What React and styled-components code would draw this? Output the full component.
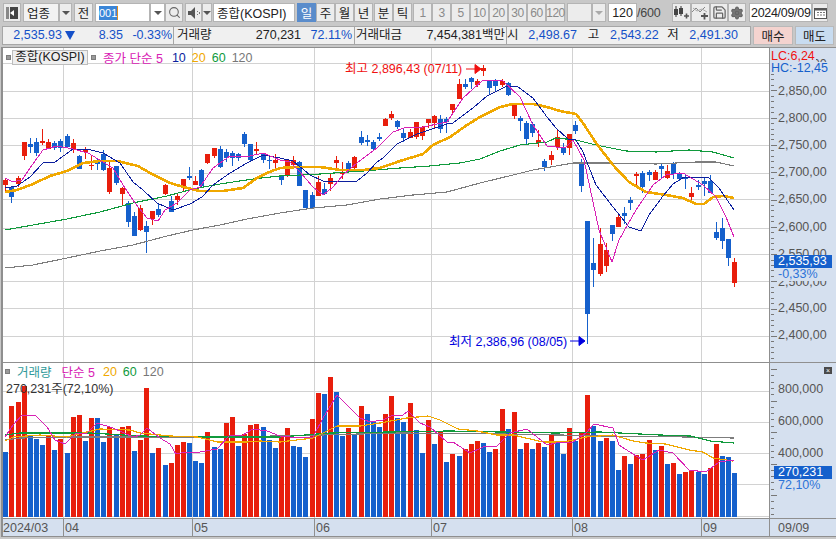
import React from 'react';
import styled, { createGlobalStyle } from 'styled-components';
import { Search, Save, Settings } from 'lucide-react';

const FONT = '"Liberation Sans", "Noto Sans CJK KR", sans-serif';
const RED = '#e81e0c';
const BLUE = '#1560cc';
const AXIS_BG = '#d5e0ef';
const GRID = '#d2d2d2';

const GlobalStyle = createGlobalStyle`
  html, body { margin: 0; padding: 0; background: #c8c8c8; }
  body { width: 836px; height: 539px; overflow: hidden; font-family: ${FONT}; font-size: 12.5px; color: #222; }
`;

// zoomed pixel readings: [wick top, body top, body bottom, wick bottom, colour]
const seg = (base, rows) => rows.map(r => [base + r[0] / 3, base + r[1] / 3, base + r[2] / 3, base + r[3] / 3, r[4]]);
const candles = [
  ...seg(75, [
    [308, 315, 330, 350, 'r'], [335, 335, 365, 384, 'b'], [303, 309, 327, 335, 'r'], [200, 201, 243, 255, 'r'],
    [189, 207, 216, 234, 'b'], [189, 201, 234, 243, 'b'], [162, 198, 204, 210, 'r'], [193, 201, 222, 222, 'r'],
    [198, 204, 219, 225, 'b'], [192, 198, 219, 231, 'b'], [178, 183, 216, 216, 'b'], [192, 204, 222, 234, 'r'],
    [240, 243, 282, 282, 'b'], [216, 222, 231, 252, 'r'], [243, 270, 273, 285, 'r'], [250, 261, 267, 285, 'b'],
    [225, 237, 285, 288, 'b'], [261, 279, 351, 357, 'r'], [273, 273, 324, 330, 'b'], [336, 339, 357, 390, 'r'],
    [378, 384, 441, 456, 'b'], [411, 423, 483, 483, 'b'], [390, 399, 465, 468, 'r'], [438, 453, 471, 534, 'b'],
    [408, 408, 432, 450, 'r'], [384, 402, 420, 426, 'b'], [327, 330, 357, 360, 'r'], [363, 378, 411, 411, 'b'],
    [354, 363, 375, 390, 'r'], [312, 312, 336, 351, 'r'], [276, 303, 309, 315, 'b'], [303, 318, 330, 330, 'r'],
    [282, 285, 333, 336, 'b'], [237, 237, 264, 267, 'r'], [219, 219, 243, 249, 'r'], [213, 222, 276, 279, 'b'],
    [222, 231, 249, 261, 'b'], [228, 234, 249, 273, 'b'], [234, 237, 249, 258, 'b'], [171, 177, 207, 216, 'b'],
    [207, 207, 255, 258, 'b'], [201, 222, 228, 237, 'r'], [234, 237, 255, 264, 'b'], [240, 255, 258, 282, 'b'],
    [237, 255, 264, 288, 'r'], [303, 303, 315, 330, 'b'],
  ]),
  ...seg(55, [
    [315, 315, 360, 366, 'r'], [303, 315, 330, 333, 'r'], [318, 321, 393, 393, 'b'], [405, 405, 459, 459, 'b'],
    [411, 420, 459, 459, 'b'], [363, 381, 423, 423, 'r'], [384, 402, 417, 420, 'b'], [357, 369, 387, 408, 'r'],
    [303, 315, 324, 345, 'r'], [321, 351, 357, 372, 'r'], [318, 324, 348, 351, 'b'], [303, 306, 339, 342, 'r'],
    [228, 246, 264, 270, 'b'], [240, 255, 261, 273, 'b'], [255, 261, 282, 288, 'b'], [234, 246, 252, 258, 'b'],
    [189, 192, 213, 213, 'r'], [168, 177, 189, 195, 'r'], [195, 198, 216, 222, 'b'], [222, 234, 249, 261, 'b'],
    [222, 231, 249, 249, 'r'], [201, 201, 246, 252, 'r'], [213, 216, 243, 255, 'r'], [192, 192, 204, 219, 'r'],
    [180, 183, 204, 219, 'r'], [180, 192, 222, 234, 'b'], [186, 192, 201, 234, 'b'], [147, 147, 165, 177, 'r'],
    [72, 87, 132, 132, 'r'], [72, 87, 96, 102, 'b'], [66, 69, 81, 102, 'b'], [72, 78, 90, 96, 'r'],
    [30, 39, 47, 63, 'r'], [75, 78, 99, 117, 'b'], [72, 75, 93, 111, 'b'], [72, 78, 90, 96, 'r'],
    [81, 84, 120, 123, 'b'], [150, 150, 183, 192, 'r'], [183, 189, 198, 228, 'b'], [198, 204, 252, 267, 'b'],
    [201, 207, 234, 246, 'b'], [225, 255, 264, 276, 'r'], [312, 318, 336, 348, 'b'], [288, 300, 315, 330, 'r'],
    [225, 246, 276, 285, 'r'],
  ]),
  ...seg(110, [
    [100, 114, 129, 135, 'b'], [72, 72, 114, 135, 'r'], [33, 45, 63, 72, 'b'], [147, 156, 228, 246, 'b'],
    [333, 333, 612, 702, 'b'], [384, 459, 480, 531, 'b'], [354, 402, 492, 498, 'r'], [399, 420, 468, 486, 'r'],
    [345, 345, 372, 393, 'b'], [312, 321, 351, 351, 'r'], [291, 309, 318, 342, 'b'], [261, 270, 279, 300, 'b'],
    [186, 192, 198, 225, 'r'], [183, 189, 231, 249, 'b'], [180, 186, 195, 213, 'b'], [180, 186, 210, 210, 'r'],
    [162, 168, 177, 207, 'b'], [165, 183, 204, 207, 'r'], [156, 159, 192, 207, 'b'], [186, 189, 207, 213, 'b'],
    [195, 201, 207, 237, 'b'], [231, 249, 261, 276, 'r'], [210, 225, 231, 240, 'b'], [201, 213, 222, 258, 'b'],
    [195, 213, 249, 249, 'b'], [336, 366, 384, 390, 'b'], [324, 354, 393, 417, 'b'], [387, 387, 444, 468, 'b'],
    [444, 456, 519, 531, 'r'],
  ]),
];

// volume bar tops as zoomed pixels, 'r' bars are negative numbers
const volumes = [
  291, -153, -141, -93, 243, 252, 270, -240, 285, -252, 294, -186, -180, 258, -189, 189, 261, -216, 237, -216,
  -213, 288, -255, -99, 294, -279, 330, -324, -270, -261, 264, 318, 324, -231, 276, 282, -204, -186, 273, -237,
  -210, -207, 216, 255, 279, -240, -219, 273, 276, 306, -192, -114, 117, -66, 111, 243, -219, 237, -153, 177,
  201, 216, -177, -123, 189, 201, -144, 225, 294, -195, 267, -228, 321, -297, 303, -282, -267, -258, 264, 291,
  -282, -162, 222, -171, 282, -264, 282, -264, 276, -240, 264, 297, -219, 258, -231, -120, 213, 258, -249, 258,
  345, -303, 327, -300, -297, -255, 285, -273, 327, -324, 357, -351, -345, 351, 357, -339, -267, 303, 306, 354,
];

const pts = list => list.map(p => p.join(',')).join(' ');
const ma5 = pts([[5,178],[13,182],[22,180],[30,168],[43,150],[57,146],[73,149],[88,153],[103,162],[113,168],[123,185],[135,203],[147,218],[158,221],[165,210],[177,203],[190,190],[200,187],[213,168],[230,156],[250,156],[263,153],[280,160],[290,162],[300,172],[313,187],[323,195],[333,187],[343,175],[357,163],[377,148],[393,132],[407,127],[423,127],[447,122],[463,98],[483,80],[503,81],[520,97],[533,125],[547,146],[556,147],[565,148],[573,140],[584,160],[599,230],[612,262],[619,240],[636,210],[653,185],[666,175],[683,173],[703,185],[716,197],[726,217],[734,237]]);
const ma10 = pts([[5,188],[17,186],[30,177],[43,163],[55,162],[73,149],[87,149],[103,153],[120,163],[133,182],[143,190],[157,203],[173,210],[190,204],[202,197],[213,185],[230,173],[247,163],[263,155],[280,158],[293,161],[310,175],[323,181],[357,181],[367,173],[377,162],[383,158],[397,144],[417,134],[447,124],[453,123],[473,108],[487,96],[507,86],[517,86],[533,98],[547,117],[556,128],[568,139],[576,140],[583,152],[596,185],[613,207],[629,227],[641,231],[649,215],[663,196],[673,184],[684,177],[709,178],[719,188],[734,210]]);
const ma20 = pts([[5,192],[17,190],[33,184],[50,176],[67,171],[83,163],[100,161],[117,161],[138,166],[150,173],[170,183],[187,188],[200,191],[223,191],[243,188],[257,178],[267,173],[280,168],[297,167],[320,167],[340,170],[363,170],[380,168],[400,161],[423,154],[433,145],[450,137],[467,125],[480,117],[500,107],[513,104],[533,104],[547,107],[560,111],[576,114],[583,123],[596,143],[613,165],[629,182],[646,192],[666,195],[683,198],[696,204],[704,204],[713,197],[723,196],[734,198]]);
const ma60 = pts([[5,230],[33,225],[67,219],[100,212],[133,203],[167,196],[193,189],[220,184],[253,179],[280,176],[320,174],[363,171],[400,168],[430,166],[460,163],[480,159],[500,151],[520,145],[547,142],[556,138],[576,140],[596,145],[626,151],[656,152],[689,150],[713,152],[734,158]]);
const ma120 = pts([[5,268],[33,265],[67,258],[100,251],[133,245],[167,236],[193,230],[220,225],[247,219],[280,213],[313,208],[347,205],[380,199],[413,195],[447,192],[480,183],[513,175],[533,170],[556,166],[573,163],[606,163],[656,164],[696,162],[716,162],[734,166]]);

const vol5 = pts([[5,437],[13,425],[22,415],[35,415],[47,427],[55,440],[65,444],[75,434],[87,433],[97,423],[113,428],[133,437],[140,435],[147,428],[160,438],[170,444],[176,454],[187,452],[200,452],[217,449],[230,435],[243,435],[253,429],[267,431],[280,436],[300,438],[313,437],[323,418],[337,395],[347,405],[360,418],[370,422],[383,420],[393,415],[403,415],[408,411],[420,423],[430,427],[447,442],[453,442],[470,453],[483,447],[497,446],[510,433],[527,429],[547,445],[556,443],[573,442],[586,433],[594,424],[613,428],[619,445],[636,456],[643,460],[659,450],[673,453],[689,470],[706,472],[719,462],[734,460]]);
const vol20 = pts([[5,441],[13,437],[40,435],[67,437],[87,432],[100,429],[130,430],[140,433],[170,436],[197,437],[217,442],[247,442],[260,441],[280,442],[313,438],[337,426],[360,426],[380,423],[407,418],[428,416],[440,420],[458,429],[477,431],[497,435],[513,435],[543,442],[560,442],[569,441],[586,437],[613,435],[633,441],[646,443],[666,444],[689,450],[703,452],[713,458],[733,461]]);
const vol60 = pts([[5,435],[20,433],[90,433],[140,436],[200,437],[280,437],[330,433],[450,431],[500,432],[556,433],[600,432],[660,435],[690,436],[710,441],[734,443]]);
const vol120 = pts([[5,440],[20,438],[70,437],[190,437],[280,436],[400,433],[500,434],[560,435],[600,436],[690,437],[734,438]]);

const priceGrid = [63, 91, 118, 145, 173, 199, 228, 254, 281, 308, 336];
const volumeGrid = [391, 422, 453, 484, 516];
const monthLines = [63, 192, 314, 431, 572, 701];
const priceLabels = [
  ['2,900,00', 63], ['2,850,00', 90], ['2,800,00', 117], ['2,750,00', 144], ['2,700,00', 171],
  ['2,650,00', 198], ['2,600,00', 226], ['2,550,00', 253], ['2,500,00', 281], ['2,450,00', 307], ['2,400,00', 334],
];
const volumeLabels = [['800,000', 388], ['600,000', 420], ['400,000', 452]];
const monthLabels = [['2024/03', 3], ['04', 65], ['05', 194], ['06', 316], ['07', 433], ['08', 574], ['09', 703]];

const xAt = i => Math.round(5.3 + 6.126 * i);
const range = (from, to, step) => {
  const out = [];
  for (let v = from; v < to; v += step) out.push(v);
  return out;
};

const Page = styled.div`
  width: 836px;
  height: 539px;
  display: flex;
  flex-direction: column;
`;

const ToolBar = styled.div`
  display: flex;
  align-items: stretch;
  height: 19px;
  padding: 3px 0 0 3px;
`;

const Group = styled.div`
  display: flex;
  margin-left: ${p => p.$ml || 0}px;
`;

const ToolButton = styled.div`
  box-sizing: border-box;
  width: ${p => p.$w || 19}px;
  display: flex;
  align-items: center;
  justify-content: center;
  background: ${p => p.$bg || (p.$active ? '#5a8ccb' : '#ececec')};
  color: ${p => (p.$active ? '#fff' : p.$muted ? '#8a8a8a' : '#222')};
  border: 1px solid ${p => (p.$active ? '#5a8ccb' : '#b4b4b4')};
  font-size: ${p => (p.$small ? '12px' : '12.5px')};
  letter-spacing: ${p => (p.$small ? '-0.5px' : '0')};
  white-space: nowrap;
`;

const Field = styled.div`
  box-sizing: border-box;
  width: ${p => p.$w}px;
  display: flex;
  align-items: center;
  justify-content: ${p => p.$justify || 'flex-start'};
  padding: 0 ${p => (p.$tight ? 1 : 3)}px;
  letter-spacing: ${p => (p.$tight ? '-0.3px' : '0')};
  background: ${p => p.$bg || '#fff'};
  border: 1px solid #b4b4b4;
  white-space: nowrap;
`;

const Selected = styled.span`
  background: #3b86d8;
  color: #fff;
  font-size: 11px;
  line-height: 14px;
  border-right: 1px solid #e08a20;
`;

const Caret = styled.i`
  width: 0;
  height: 0;
  border-left: 4px solid transparent;
  border-right: 4px solid transparent;
  border-top: 4px solid ${p => p.$color || '#555'};
`;

const Total = styled.span`
  width: 27px;
  color: #444;
  display: flex;
  align-items: center;
  letter-spacing: -0.2px;
`;

const InfoRow = styled.div`
  display: flex;
  height: 19px;
  margin-top: 4px;
  padding-left: 2px;
`;

const InfoBar = styled.div`
  box-sizing: border-box;
  width: 749px;
  display: flex;
  align-items: center;
  background: #f0f0f0;
  border: 1px solid #a6a6a6;
`;

const Cell = styled.span`
  box-sizing: border-box;
  width: ${p => p.$w}px;
  margin-left: ${p => p.$ml || 0}px;
  text-align: ${p => p.$align || 'right'};
  color: ${p => p.$color || '#222'};
  padding-left: ${p => p.$pl || 0}px;
  border-left: ${p => (p.$split ? '1px solid #a6a6a6' : 'none')};
  line-height: 17px;
  white-space: nowrap;
`;

const Down = styled.i`
  width: 0;
  height: 0;
  margin: 0 0 0 3px;
  border-left: 5px solid transparent;
  border-right: 5px solid transparent;
  border-top: 9px solid #1450c8;
`;

const TradeButton = styled.div`
  box-sizing: border-box;
  width: ${p => p.$w}px;
  margin-left: ${p => p.$ml}px;
  display: flex;
  align-items: center;
  justify-content: center;
  background: ${p => p.$bg};
  border: 1px solid #b9b9b9;
`;

const Chart = styled.div`
  margin: 2px 0 0 1px;
  border-left: 2px solid #8f8f8f;
  border-top: 1px solid #8f8f8f;
  display: flex;
  flex-direction: column;
  background: #fff;
`;

const Pane = styled.div`
  position: relative;
  display: flex;
  height: ${p => p.$h}px;
  border-bottom: 1px solid #8f8f8f;
`;

const Plot = styled.svg`
  display: block;
  width: 766px;
  height: 100%;
`;

const AxisPanel = styled.svg`
  display: block;
  flex: 1;
  height: 100%;
  background: ${AXIS_BG};
  border-left: 1px solid #8f8f8f;
  font-family: ${FONT};
`;

const Legend = styled.div`
  position: absolute;
  left: ${p => p.$left}px;
  top: ${p => p.$top}px;
  display: flex;
  align-items: center;
  height: 15px;
  font-size: 12.5px;
`;

const Swatch = styled.i`
  box-sizing: border-box;
  width: 5px;
  height: 5px;
  margin-right: ${p => p.$mr}px;
  background: #9a9a9a;
  border: 1px solid #7d7d7d;
`;

const NameBox = styled.span`
  box-sizing: border-box;
  height: 15px;
  width: 76px;
  margin-right: 3px;
  text-align: center;
  line-height: 13px;
  background: #efefef;
  border: 1px solid #bdbdbd;
`;

const Ink = styled.span`
  color: ${p => p.$color};
  margin-right: ${p => p.$mr || 0}px;
  white-space: nowrap;
`;

const VolumeNote = styled.div`
  position: absolute;
  left: 3px;
  top: 15px;
  color: #333;
  font-size: 12.5px;
`;

const MarkerText = styled.text`
  font-family: ${FONT};
  font-size: 12.5px;
`;

const Corner = styled.div`
  position: absolute;
  left: 767px;
  top: 2px;
  display: flex;
  flex-direction: column;
  align-items: flex-start;
  line-height: 12px;
  font-size: 12.5px;
`;

const CornerLine = styled.span`
  background: ${AXIS_BG};
  color: ${p => p.$color};
  padding: 0 1px;
`;

const PriceTag = styled.div`
  position: absolute;
  left: 771px;
  top: ${p => p.$top}px;
  width: 58px;
  display: flex;
  flex-direction: column;
  line-height: 13px;
  font-size: 12.5px;
`;

const TagValue = styled.span`
  background: #1560cc;
  color: #fff;
  padding-left: 4px;
`;

const TagRate = styled.span`
  background: ${AXIS_BG};
  color: #2c73d8;
  padding-left: 4px;
`;

const CloseMark = styled.div`
  position: absolute;
  left: 821px;
  top: 4px;
  width: 8px;
  height: 7px;
  background: #4a4a4a;
  color: #fff;
  font-size: 7px;
  line-height: 7px;
  text-align: center;
`;

const TimeAxis = styled.svg`
  display: block;
  width: 100%;
  height: 17px;
  background: ${AXIS_BG};
  border-bottom: 1px solid #8f8f8f;
  font-family: ${FONT};
`;

function Ma({ points, color, width = 1 }) {
  return <polyline points={points} fill="none" stroke={color} strokeWidth={width} shapeRendering="crispEdges" />;
}

function GridLines({ rows, top, bottom }) {
  return (
    <g stroke={GRID} strokeWidth="1" shapeRendering="crispEdges">
      {rows.map(y => <line key={y} x1="2" x2="769" y1={y + 0.5} y2={y + 0.5} />)}
      {monthLines.map(x => <line key={x} x1={x + 0.5} x2={x + 0.5} y1={top} y2={bottom} />)}
    </g>
  );
}

function Candle({ c, i }) {
  const x = xAt(i);
  const color = c[4] === 'r' ? RED : BLUE;
  return (
    <g fill={color} shapeRendering="crispEdges">
      <rect x={x} y={c[0]} width="1" height={c[3] - c[0]} />
      <rect x={x - 2} y={c[1]} width="5" height={Math.max(c[2] - c[1], 1)} />
    </g>
  );
}

function AxisTicks({ from, to, step, every, labels }) {
  return (
    <g>
      {range(from, to, step).map((y, n) => (
        <line key={y} x1="771" x2={n % every === 0 ? 777 : 774} y1={Math.round(y) + 0.5} y2={Math.round(y) + 0.5} stroke="#777" shapeRendering="crispEdges" />
      ))}
      {labels.map(([t, y]) => (
        <text key={t} x="778" y={y + 5} fontSize="12.5" fill="#555">{t}</text>
      ))}
    </g>
  );
}

function LeftPanelIcon() {
  return (
    <svg width="14" height="14" viewBox="0 0 14 14">
      <rect x="5" y="1" width="8" height="12" fill="#444" />
      <rect x="1" y="1" width="3" height="12" fill="#888" />
      <path d="M9 4 L5 7 L9 10 Z" fill="#fff" />
    </svg>
  );
}

function SpeakerIcon() {
  return (
    <svg width="14" height="14" viewBox="0 0 14 14">
      <path d="M1 5 H4 L8 1 V13 L4 9 H1 Z" fill="#555" />
      <path d="M10 5 h1 v1 h-1z M10 8 h1 v1 h-1z M12 6 h1 v2 h-1z" fill="#777" />
    </svg>
  );
}

function CandlePlusIcon() {
  return (
    <svg width="17" height="15" viewBox="0 0 17 15">
      <path d="M3 1v3M3 10v2M8 1v2M8 9v2" stroke="#333" />
      <rect x="1" y="4" width="4" height="6" fill="#444" />
      <rect x="6" y="3" width="4" height="6" fill="#444" />
      <path d="M11 11h5M13.5 8.5v5" stroke="#555" strokeWidth="1.6" />
    </svg>
  );
}

function LinePlusIcon() {
  return (
    <svg width="17" height="15" viewBox="0 0 17 15">
      <path d="M0 7 L4 3 L8 7 L13 2" stroke="#888" fill="none" />
      <path d="M1 3 L5 6 L10 4 L15 7" stroke="#aaa" fill="none" />
      <path d="M9 11h7M12.5 8v6.5" stroke="#555" strokeWidth="1.8" />
    </svg>
  );
}

function CalendarIcon() {
  return (
    <svg width="13" height="12" viewBox="0 0 13 12">
      <rect x="0.5" y="1.5" width="12" height="10" fill="#fff" stroke="#555" />
      <rect x="1" y="1" width="11" height="2.5" fill="#555" />
      <path d="M3 5.5h2M6 5.5h2M9 5.5h2M3 8h2M6 8h2M9 8h2" stroke="#777" />
    </svg>
  );
}

export default function App() {
  return (
    <Page>
      <GlobalStyle />
      <ToolBar>
        <ToolButton $w={18}><LeftPanelIcon /></ToolButton>
        <Group $ml={2}>
          <Field $w={36} $bg="#f2f2f2">업종</Field>
          <ToolButton $w={13}><Caret /></ToolButton>
        </Group>
        <Group $ml={2}><ToolButton>전</ToolButton></Group>
        <Group $ml={2}>
          <Field $w={55}><Selected>001</Selected></Field>
          <ToolButton $w={15} $bg="#fff"><Caret /></ToolButton>
          <ToolButton $w={18}><Search size={13} color="#666" strokeWidth={2} /></ToolButton>
        </Group>
        <Group $ml={2}>
          <ToolButton $w={17}><SpeakerIcon /></ToolButton>
          <ToolButton $w={10}><Caret /></ToolButton>
        </Group>
        <Group $ml={1}><Field $w={82}>종합(KOSPI)</Field></Group>
        <Group $ml={2}>
          <ToolButton $active>일</ToolButton>
          <ToolButton>주</ToolButton>
          <ToolButton>월</ToolButton>
          <ToolButton>년</ToolButton>
        </Group>
        <Group $ml={1}>
          <ToolButton>분</ToolButton>
          <ToolButton>틱</ToolButton>
        </Group>
        <Group $ml={1}>
          {['1', '3', '5', '10', '20', '30', '60', '120'].map(n => (
            <ToolButton key={n} $muted $small>{n}</ToolButton>
          ))}
        </Group>
        <Group $ml={2}>
          <ToolButton $w={25} />
          <ToolButton $w={14}><Caret $color="#aaa" /></ToolButton>
        </Group>
        <Group $ml={2}>
          <Field $w={29} $justify="flex-end">120</Field>
          <Total>/600</Total>
        </Group>
        <Group $ml={8}>
          <ToolButton><CandlePlusIcon /></ToolButton>
          <ToolButton><LinePlusIcon /></ToolButton>
          <ToolButton $w={18}><Save size={15} color="#666" strokeWidth={2} /></ToolButton>
          <ToolButton $w={18}><Settings size={14} color="#666" fill="#777" strokeWidth={2} /></ToolButton>
        </Group>
        <Group $ml={3}>
          <Field $w={63} $tight>2024/09/09</Field>
          <ToolButton $w={16}><CalendarIcon /></ToolButton>
        </Group>
      </ToolBar>

      <InfoRow>
        <InfoBar>
          <Cell $w={59} $color="#1450c8">2,535.93</Cell>
          <Down />
          <Cell $w={48} $color="#1450c8">8.35</Cell>
          <Cell $w={49} $color="#1450c8">-0.33%</Cell>
          <Cell $w={38} $split $align="left" $pl={3} $ml={1}>거래량</Cell>
          <Cell $w={90}>270,231</Cell>
          <Cell $w={51} $color="#1450c8">72.11%</Cell>
          <Cell $w={52} $split $align="left" $pl={1} $ml={2}>거래대금</Cell>
          <Cell $w={99}>7,454,381백만</Cell>
          <Cell $w={12} $split $align="center" $ml={1}>시</Cell>
          <Cell $w={59} $color="#1450c8">2,498.67</Cell>
          <Cell $w={33} $align="center">고</Cell>
          <Cell $w={48} $color="#1450c8">2,543.22</Cell>
          <Cell $w={30} $align="center">저</Cell>
          <Cell $w={50} $color="#1450c8">2,491.30</Cell>
        </InfoBar>
        <TradeButton $w={40} $ml={2} $bg="#f4d3cf">매수</TradeButton>
        <TradeButton $w={39} $ml={2} $bg="#c8dcf0">매도</TradeButton>
      </InfoRow>

      <Chart>
        <Pane $h={314}>
          <Plot viewBox="3 48 766 314" preserveAspectRatio="none">
            <GridLines rows={priceGrid} top={48} bottom={362} />
            {candles.map((c, i) => <Candle key={i} c={c} i={i} />)}
            <Ma points={ma120} color="#7d7d7d" width={1.1} />
            <Ma points={ma60} color="#109a3c" width={1.1} />
            <Ma points={ma20} color="#f0a800" width={2.6} />
            <Ma points={ma10} color="#0c1f9e" />
            <Ma points={ma5} color="#d820b4" />
            <MarkerText x="345" y="73" fill="#f01010">최고 2,896,43 (07/11)</MarkerText>
            <path d="M466 69 H475 M475 64.5 L481 69 L475 73.5 Z" stroke="#f01010" fill="#f01010" />
            <MarkerText x="449" y="346" fill="#0000e0">최저 2,386,96 (08/05)</MarkerText>
            <path d="M570 341 H579 M579 336.5 L585 341 L579 345.5 Z" stroke="#0000e0" fill="#0000e0" />
          </Plot>
          <AxisPanel viewBox="770 48 66 314" preserveAspectRatio="none">
            <AxisTicks from={63} to={360} step={5.46} every={5} labels={priceLabels} />
          </AxisPanel>
          <Legend $left={3} $top={2}>
            <Swatch $mr={1} />
            <NameBox>종합(KOSPI)</NameBox>
            <Swatch $mr={7} />
            <Ink $color="#d820b4" $mr={9}>종가 단순 5</Ink>
            <Ink $color="#0c1f9e" $mr={6}>10</Ink>
            <Ink $color="#f0a800" $mr={6}>20</Ink>
            <Ink $color="#109a3c" $mr={6}>60</Ink>
            <Ink $color="#777">120</Ink>
          </Legend>
          <Corner>
            <CornerLine $color="#f01010">LC:6,24</CornerLine>
            <CornerLine $color="#1560cc">HC:-12,45</CornerLine>
          </Corner>
          <PriceTag $top={207}>
            <TagValue>2,535,93</TagValue>
            <TagRate>-0,33%</TagRate>
          </PriceTag>
        </Pane>

        <Pane $h={155}>
          <Plot viewBox="3 363 766 155" preserveAspectRatio="none">
            <GridLines rows={volumeGrid} top={363} bottom={518} />
            {volumes.map((v, i) => {
              const top = 355 + Math.abs(v) / 3;
              return <rect key={i} x={xAt(i) - 2} y={top} width="5" height={517 - top} fill={v < 0 ? RED : BLUE} shapeRendering="crispEdges" />;
            })}
            <Ma points={vol120} color="#7d7d7d" width={1.2} />
            <Ma points={vol60} color="#109a3c" width={1.2} />
            <Ma points={vol20} color="#f0a800" width={1.2} />
            <Ma points={vol5} color="#d820b4" />
          </Plot>
          <AxisPanel viewBox="770 363 66 155" preserveAspectRatio="none">
            <AxisTicks from={369} to={516} step={6.3} every={5} labels={volumeLabels} />
          </AxisPanel>
          <Legend $left={2} $top={1}>
            <Swatch $mr={7} />
            <Ink $color="#2f9a9a" $mr={10}>거래량</Ink>
            <Ink $color="#d820b4" $mr={8}>단순 5</Ink>
            <Ink $color="#f0a800" $mr={6}>20</Ink>
            <Ink $color="#109a3c" $mr={6}>60</Ink>
            <Ink $color="#777">120</Ink>
          </Legend>
          <VolumeNote>270,231주(72,10%)</VolumeNote>
          <PriceTag $top={103}>
            <TagValue>270,231</TagValue>
            <TagRate>72,10%</TagRate>
          </PriceTag>
          <CloseMark>×</CloseMark>
        </Pane>

        <TimeAxis viewBox="3 519 833 17" preserveAspectRatio="none">
          {[...monthLines, 769].map(x => (
            <line key={x} x1={x + 0.5} x2={x + 0.5} y1="519" y2="536" stroke="#8f8f8f" shapeRendering="crispEdges" />
          ))}
          {monthLabels.map(([t, x]) => (
            <text key={t} x={x} y="532" fontSize="12.5" fill="#555">{t}</text>
          ))}
          <text x="778" y="532" fontSize="12.5" fill="#555">09/09</text>
        </TimeAxis>
      </Chart>
    </Page>
  );
}
